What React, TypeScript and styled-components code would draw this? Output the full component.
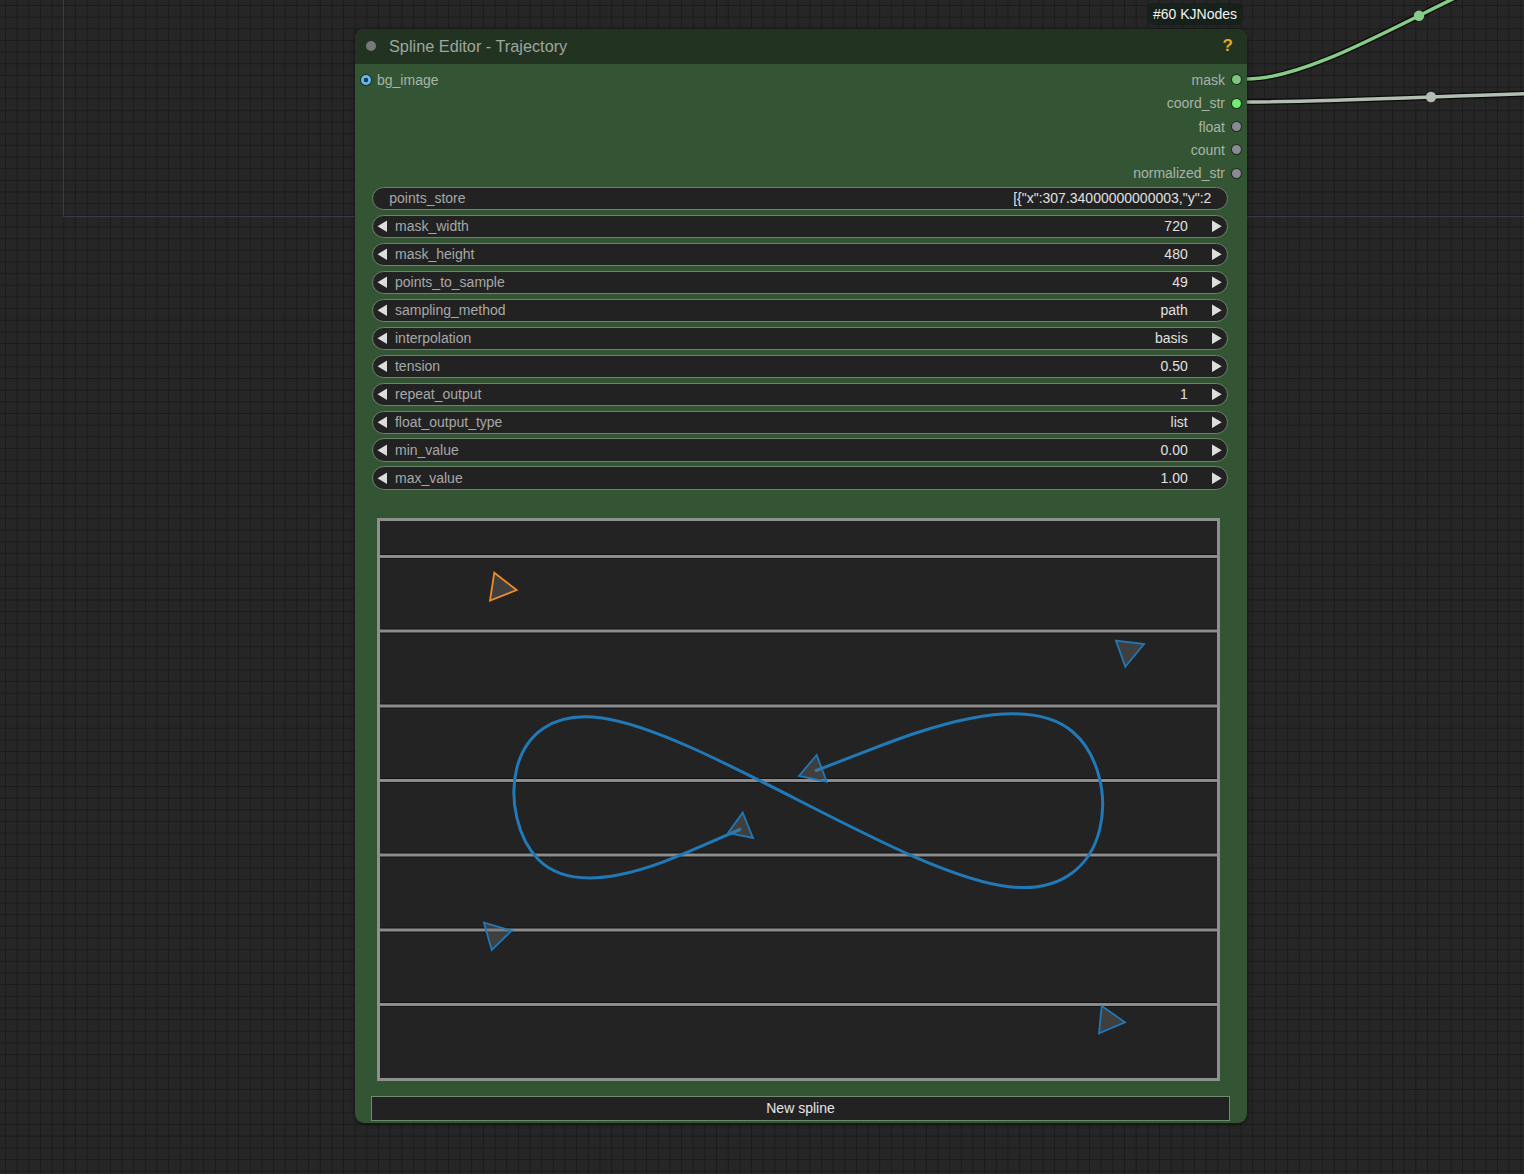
import React from "react"
import styled, { createGlobalStyle } from "styled-components"

// ---- global / graph canvas ----

const GlobalStyle = createGlobalStyle`
  html, body {
    margin: 0;
    padding: 0;
  }
  body {
    width: 1524px;
    height: 1174px;
    overflow: hidden;
    background-color: #262626;
    background-image:
      linear-gradient(to right, #1b1b1b 1px, transparent 1px),
      linear-gradient(to bottom, #1b1b1b 1px, transparent 1px);
    background-size: 11.67px 11.67px;
    background-position: 5px 5px;
    font-family: "Liberation Sans", Arial, sans-serif;
  }
`

const Graph = styled.div`
  position: relative;
  width: 1524px;
  height: 1174px;
  overflow: hidden;
`

const GroupOutline = styled.div`
  position: absolute;
  left: 62.5px;
  top: -200px;
  width: 2000px;
  height: 416px;
  border-left: 1.5px solid #383c50;
  border-bottom: 1.5px solid #383c50;
`

const LinkLayer = styled.svg`
  position: absolute;
  left: 0;
  top: 0;
  pointer-events: none;
`

// ---- node ----

const Node = styled.div`
  position: absolute;
  left: 355px;
  top: 29px;
  width: 892px;
  height: 1094.3px;
  display: flex;
  flex-direction: column;
  background: #335533;
  border-radius: 9px;
  box-shadow: 0 1px 4px rgba(0, 0, 0, 0.55);
`

const Badge = styled.div`
  position: absolute;
  right: 4px;
  bottom: calc(100% + 4px);
  height: 22.5px;
  padding: 0 6px;
  display: flex;
  align-items: center;
  background: #15211a;
  border-radius: 6px;
  color: #f2f2f2;
  font-size: 14px;
`

const TitleBar = styled.div`
  height: 34.5px;
  flex: none;
  display: flex;
  align-items: center;
  padding: 0 14px 0 11px;
  background: #223322;
  border-radius: 9px 9px 0 0;
`

const TitleDot = styled.span`
  width: 10px;
  height: 10px;
  border-radius: 50%;
  background: #787878;
  margin-right: 13px;
`

const Title = styled.span`
  color: #9ea69e;
  font-size: 16.3px;
`

const Help = styled.span`
  margin-left: auto;
  color: #e3a334;
  font-size: 17px;
  font-weight: bold;
`

const Slots = styled.div`
  margin-top: 4.8px;
  display: flex;
  flex-direction: column;
`

const SlotRow = styled.div`
  height: 23.33px;
  display: flex;
  align-items: center;
  padding: 0 6px;
`

const Slot = styled.div<{ $out?: boolean }>`
  display: flex;
  align-items: center;
  gap: ${(p) => (p.$out ? "7px" : "6px")};
  margin-left: ${(p) => (p.$out ? "auto" : "0")};
  color: #aab3aa;
  font-size: 14px;
`

const SlotDot = styled.span<{ $color: string; $hole?: boolean }>`
  width: ${(p) => (p.$hole ? "10px" : "9px")};
  height: ${(p) => (p.$hole ? "10px" : "9px")};
  border-radius: 50%;
  background: ${(p) =>
    p.$hole
      ? `radial-gradient(circle, #1e3a55 0 2px, ${p.$color} 2.6px)`
      : p.$color};
  box-shadow: 0 0 0 1px rgba(0, 0, 0, 0.45);
`

const Widgets = styled.div`
  margin: 1.7px 18.7px 0 16.7px;
  display: flex;
  flex-direction: column;
  gap: 4.67px;
`

const Widget = styled.div<{ $text?: boolean }>`
  height: 23.33px;
  box-sizing: border-box;
  display: flex;
  align-items: center;
  padding: ${(p) => (p.$text ? "0 16px 0 16.6px" : "0 5.6px 0 4.8px")};
  background: #222;
  border: 1px solid #6d826d;
  border-radius: 12px;
  font-size: 14px;
`

const Arrow = styled.span<{ $dir: "left" | "right" }>`
  width: 10px;
  height: 12px;
  flex: none;
  background: #dddddd;
  clip-path: ${(p) =>
    p.$dir === "left"
      ? "polygon(0 50%, 100% 0, 100% 100%)"
      : "polygon(0 0, 100% 50%, 0 100%)"};
`

const Label = styled.span<{ $gap?: number }>`
  color: #a8a8a8;
  margin-left: ${(p) => p.$gap ?? 0}px;
  white-space: nowrap;
`

const Value = styled.span<{ $gap?: number }>`
  color: #e0e0e0;
  margin-left: auto;
  margin-right: ${(p) => p.$gap ?? 0}px;
  white-space: nowrap;
`

const SplineCanvas = styled.div`
  margin: 28px 0 0 22px;
  width: 843px;
  height: 563px;
  box-sizing: border-box;
  border: 3px solid #8f8f8f;
  background: #232323;
  display: flex;
`

const NewSpline = styled.button`
  margin: 15px 0 0 16px;
  width: 859px;
  height: 25px;
  box-sizing: border-box;
  background: #222;
  border: 1.5px solid #6f8a6f;
  color: #e6e6e6;
  font-family: "Liberation Sans", Arial, sans-serif;
  font-size: 14px;
  padding: 0;
`

// ---- data ----

type Pt = [number, number]

const widgets = [
  { label: "mask_width", value: "720" },
  { label: "mask_height", value: "480" },
  { label: "points_to_sample", value: "49" },
  { label: "sampling_method", value: "path" },
  { label: "interpolation", value: "basis" },
  { label: "tension", value: "0.50" },
  { label: "repeat_output", value: "1" },
  { label: "float_output_type", value: "list" },
  { label: "min_value", value: "0.00" },
  { label: "max_value", value: "1.00" },
]

const outputs = [
  { name: "mask", color: "#7fc47f" },
  { name: "coord_str", color: "#72ee72" },
  { name: "float", color: "#8a8a94" },
  { name: "count", color: "#8a8a94" },
  { name: "normalized_str", color: "#8a8a94" },
]

// control points in page coordinates
const controlPoints: Pt[] = [
  [741, 829],
  [497, 935],
  [501, 588],
  [1110, 1021],
  [1128, 650],
  [815, 771],
]

// arrow markers drawn on the points, already rotated
const markers: { pts: Pt[]; color: string }[] = [
  { pts: [[494.3, 572.7], [516.7, 590], [490, 600.7]], color: "#ef8b25" },
  { pts: [[1116, 640.7], [1144, 644], [1125.3, 666.7]], color: "#2277b4" },
  { pts: [[816.7, 755], [826.7, 781.7], [799, 776]], color: "#2277b4" },
  { pts: [[742.7, 812.7], [753, 838], [728, 833]], color: "#2277b4" },
  { pts: [[484, 922.7], [511.7, 930.7], [491.7, 950]], color: "#2277b4" },
  { pts: [[1101.7, 1006], [1125, 1022.3], [1099, 1033.3]], color: "#2277b4" },
]

const gridRows = [556.5, 631, 706, 780.5, 855, 930, 1004.5]

// same as d3.curveBasis
function basisPath(pts: Pt[]): string {
  const f = (n: number) => n.toFixed(2)
  let d = ""
  let x0 = NaN
  let y0 = NaN
  let x1 = NaN
  let y1 = NaN
  let state = 0
  const seg = (x: number, y: number) => {
    d += `C${f((2 * x0 + x1) / 3)},${f((2 * y0 + y1) / 3)} ${f((x0 + 2 * x1) / 3)},${f(
      (y0 + 2 * y1) / 3
    )} ${f((x0 + 4 * x1 + x) / 6)},${f((y0 + 4 * y1 + y) / 6)}`
  }
  for (const [x, y] of pts) {
    if (state === 0) {
      state = 1
      d += `M${x},${y}`
    } else if (state === 1) {
      state = 2
    } else {
      if (state === 2) {
        state = 3
        d += `L${f((5 * x0 + x1) / 6)},${f((5 * y0 + y1) / 6)}`
      }
      seg(x, y)
    }
    x0 = x1
    x1 = x
    y0 = y1
    y1 = y
  }
  if (state === 3) seg(x1, y1)
  d += `L${x1},${y1}`
  return d
}

function Links() {
  return (
    <LinkLayer width={1524} height={1174}>
      <path
        d='M1247,79 C1338.6,79 1499.4,-47.6 1591,-47.6'
        fill='none'
        stroke='#0b0b0b'
        strokeWidth={6}
      />
      <path
        d='M1247,79 C1338.6,79 1499.4,-47.6 1591,-47.6'
        fill='none'
        stroke='#86cc86'
        strokeWidth={3.5}
      />
      <circle cx={1419} cy={15.7} r={5.2} fill='#86cc86' />
      <path
        d='M1247,102 C1340,102 1522,92 1615,92'
        fill='none'
        stroke='#0b0b0b'
        strokeWidth={6}
      />
      <path
        d='M1247,102 C1340,102 1522,92 1615,92'
        fill='none'
        stroke='#b3beb3'
        strokeWidth={3.5}
      />
      <circle cx={1431} cy={97} r={5.2} fill='#b3beb3' />
    </LinkLayer>
  )
}

function Spline() {
  const d = basisPath(controlPoints)
  return (
    <SplineCanvas>
      <svg width={837} height={557} viewBox='380 521 837 557'>
        {gridRows.map((y) => (
          <g key={y}>
            <line x1={380} x2={1217} y1={y} y2={y} stroke='#141414' strokeWidth={5} />
            <line x1={380} x2={1217} y1={y} y2={y} stroke='#8c8c8c' strokeWidth={3} />
          </g>
        ))}
        <path d={d} fill='none' stroke='#2179b8' strokeWidth={3} />
        {markers.map((m, i) => (
          <polygon
            key={i}
            points={m.pts.map((p) => p.join(",")).join(" ")}
            fill='rgba(110,110,110,0.38)'
            stroke={m.color}
            strokeWidth={1.8}
            strokeLinejoin='miter'
          />
        ))}
      </svg>
    </SplineCanvas>
  )
}

export default function App() {
  return (
    <Graph>
      <GlobalStyle />
      <GroupOutline />
      <Links />
      <Node>
        <Badge>#60 KJNodes</Badge>
        <TitleBar>
          <TitleDot />
          <Title>Spline Editor - Trajectory</Title>
          <Help>?</Help>
        </TitleBar>
        <Slots>
          {outputs.map((o, i) => (
            <SlotRow key={o.name}>
              {i === 0 && (
                <Slot>
                  <SlotDot $color='#66b6f2' $hole />
                  bg_image
                </Slot>
              )}
              <Slot $out>
                {o.name}
                <SlotDot $color={o.color} />
              </Slot>
            </SlotRow>
          ))}
        </Slots>
        <Widgets>
          <Widget $text>
            <Label>points_store</Label>
            <Value>[{"{"}"x":307.34000000000003,"y":2</Value>
          </Widget>
          {widgets.map((w) => (
            <Widget key={w.label}>
              <Arrow $dir='left' />
              <Label $gap={7.5}>{w.label}</Label>
              <Value $gap={24}>{w.value}</Value>
              <Arrow $dir='right' />
            </Widget>
          ))}
        </Widgets>
        <Spline />
        <NewSpline>New spline</NewSpline>
      </Node>
    </Graph>
  )
}
